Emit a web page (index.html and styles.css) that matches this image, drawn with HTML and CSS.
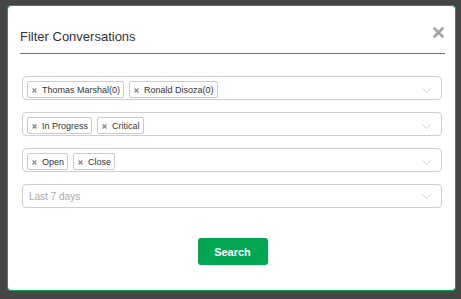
FILE: index.html
```html
<!DOCTYPE html>
<html>
<head>
<meta charset="utf-8">
<link rel="stylesheet" href="styles.css">
</head>
<body>
<div class="modal">
  <div class="header">
    <h1 class="title">Filter Conversations</h1>
    <svg class="close" width="11" height="11" viewBox="0 0 11 11"><path d="M1.5 1.5L9.5 9.5M9.5 1.5L1.5 9.5" stroke="#a3a3a3" stroke-width="2.6" stroke-linecap="round"/></svg>
  </div>
  <div class="fields">
    <div class="select">
      <div class="chips">
        <span class="chip"><svg class="x" width="5" height="5" viewBox="0 0 5 5"><path d="M0.6 0.6L4.4 4.4M4.4 0.6L0.6 4.4" stroke="#8a8a8a" stroke-width="1.4"/></svg>Thomas Marshal(0)</span>
        <span class="chip"><svg class="x" width="5" height="5" viewBox="0 0 5 5"><path d="M0.6 0.6L4.4 4.4M4.4 0.6L0.6 4.4" stroke="#8a8a8a" stroke-width="1.4"/></svg>Ronald Disoza(0)</span>
      </div>
      <svg class="chev" width="9" height="5" viewBox="0 0 9 5"><path d="M0.5 0.5L4.5 4.5L8.5 0.5" fill="none" stroke="#cfcfcf" stroke-width="1"/></svg>
    </div>
    <div class="select">
      <div class="chips">
        <span class="chip"><svg class="x" width="5" height="5" viewBox="0 0 5 5"><path d="M0.6 0.6L4.4 4.4M4.4 0.6L0.6 4.4" stroke="#8a8a8a" stroke-width="1.4"/></svg>In Progress</span>
        <span class="chip"><svg class="x" width="5" height="5" viewBox="0 0 5 5"><path d="M0.6 0.6L4.4 4.4M4.4 0.6L0.6 4.4" stroke="#8a8a8a" stroke-width="1.4"/></svg>Critical</span>
      </div>
      <svg class="chev" width="9" height="5" viewBox="0 0 9 5"><path d="M0.5 0.5L4.5 4.5L8.5 0.5" fill="none" stroke="#cfcfcf" stroke-width="1"/></svg>
    </div>
    <div class="select">
      <div class="chips">
        <span class="chip"><svg class="x" width="5" height="5" viewBox="0 0 5 5"><path d="M0.6 0.6L4.4 4.4M4.4 0.6L0.6 4.4" stroke="#8a8a8a" stroke-width="1.4"/></svg>Open</span>
        <span class="chip"><svg class="x" width="5" height="5" viewBox="0 0 5 5"><path d="M0.6 0.6L4.4 4.4M4.4 0.6L0.6 4.4" stroke="#8a8a8a" stroke-width="1.4"/></svg>Close</span>
      </div>
      <svg class="chev" width="9" height="5" viewBox="0 0 9 5"><path d="M0.5 0.5L4.5 4.5L8.5 0.5" fill="none" stroke="#cfcfcf" stroke-width="1"/></svg>
    </div>
    <div class="select single">
      <span class="placeholder">Last 7 days</span>
      <svg class="chev" width="9" height="5" viewBox="0 0 9 5"><path d="M0.5 0.5L4.5 4.5L8.5 0.5" fill="none" stroke="#cfcfcf" stroke-width="1"/></svg>
    </div>
  </div>
  <div class="actions">
    <button class="search">Search</button>
  </div>
</div>
</body>
</html>
```
FILE: styles.css
```css
html, body {
  margin: 0;
  padding: 0;
  background: #454545;
  height: 100%;
}
body {
  font-family: "Liberation Sans", Arial, sans-serif;
  padding-top: 5px;
  box-sizing: border-box;
}
.modal {
  margin-left: 7px;
  width: 447px;
  height: 284px;
  background: #fff;
  border: 1px solid #00a651;
  border-radius: 4px;
  box-sizing: content-box;
}
.header {
  display: flex;
  justify-content: space-between;
  align-items: flex-start;
  margin: 0 10px 0 12px;
  padding-top: 23px;
  padding-bottom: 9px;
  border-bottom: 1px solid #00b050;
  position: relative;
}
.title {
  margin: 0;
  font-size: 13px;
  line-height: 15px;
  font-weight: normal;
  color: #333;
}
.close {
  position: absolute;
  right: 1px;
  top: 21px;
}
.fields {
  display: flex;
  flex-direction: column;
  gap: 12px;
  margin: 22px 13px 0 14px;
}
.select {
  height: 24px;
  box-sizing: border-box;
  border: 1px solid #cfcfcf;
  border-radius: 4px;
  display: flex;
  align-items: flex-start;
  justify-content: space-between;
  padding: 4px 10px 0 4px;
}
.select.single {
  align-items: center;
  padding: 0 10px 0 6px;
}
.chips {
  display: flex;
  gap: 5px;
}
.chip {
  display: flex;
  align-items: center;
  height: 17px;
  box-sizing: border-box;
  border: 1px solid #cacaca;
  border-radius: 2px;
  background: #fff;
  padding: 0 3px 0 4px;
  font-size: 9px;
  color: #333;
  white-space: nowrap;
}
.chip .x {
  margin-right: 5px;
  margin-top: 1px;
}
.chev {
  margin-top: 7px;
}
.single .chev {
  margin-top: 0;
}
.placeholder {
  font-size: 10px;
  color: #aaa;
}
.actions {
  display: flex;
  justify-content: center;
  margin-top: 30px;
  padding-left: 2px;
}
.search {
  width: 70px;
  height: 27px;
  border: none;
  border-radius: 3px;
  background: #00a651;
  color: #fff;
  font-family: "Liberation Sans", Arial, sans-serif;
  font-weight: bold;
  font-size: 11px;
  padding: 0;
}
```
